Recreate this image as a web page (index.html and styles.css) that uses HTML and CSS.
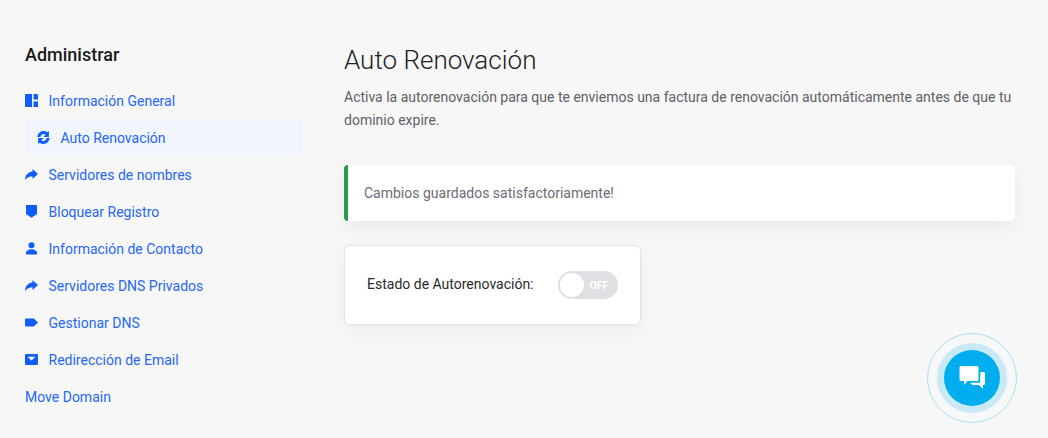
FILE: index.html
```html
<!DOCTYPE html>
<html lang="es">
<head>
    <meta charset="UTF-8">
    <meta name="viewport" content="width=device-width, initial-scale=1.0">
    <title>Auto Renovación</title>
    <link rel="stylesheet" href="styles.css">
</head>
<body>
    <div class="page">
        <aside class="sidebar">
            <h3>Administrar</h3>
            <ul class="menu">
                <li><a href="#">
                    <svg class="icon" viewBox="0 0 13 13"><path d="M0 1a1 1 0 0 1 1-1h6v13H1a1 1 0 0 1-1-1zM8.500 0H12a1 1 0 0 1 1 1v4.500H8.500zM8.500 7.500H13V13H8.500z"/></svg>
                    Información General</a></li>
                <li class="active"><a href="#">
                    <svg class="icon" viewBox="0 0 14 14"><path d="M.4 6.400C.8 2.800 3.500 0 7 0c1.500 0 2.900.5 4 1.400L12.800 0v6.400H7l2.300-2.300C8.700 3.500 7.900 3.200 7 3.200 5.400 3.200 4 4.400 3.700 6.400zM13.600 7.600C13.200 11.200 10.500 14 7 14c-1.500 0-2.900-.5-4-1.400L1.200 14V7.600H7L4.700 9.900c.6.600 1.400.9 2.300.9 1.600 0 3-1.200 3.300-3.200z"/></svg>
                    Auto Renovación</a></li>
                <li><a href="#">
                    <svg class="icon" viewBox="0 0 13 13"><path d="M7.500 1 13 6 7.500 11V8.200C4.500 8.200 2 9.300 0 12 .2 7.500 3 4 7.500 3.600z"/></svg>
                    Servidores de nombres</a></li>
                <li><a href="#">
                    <svg class="icon" viewBox="0 0 13 13"><path d="M1 0h10.500a.5.500 0 0 1 .5.500V9l-5.500 3.800L1 9V.500A.5.500 0 0 1 1 0z"/></svg>
                    Bloquear Registro</a></li>
                <li><a href="#">
                    <svg class="icon" viewBox="0 0 13 13"><circle cx="6.500" cy="3.300" r="3"/><path d="M1 11c0-2.700 3.500-3.800 5.500-3.800S12 8.300 12 11v1.500H1z"/></svg>
                    Información de Contacto</a></li>
                <li><a href="#">
                    <svg class="icon" viewBox="0 0 13 13"><path d="M7.500 1 13 6 7.500 11V8.200C4.500 8.200 2 9.300 0 12 .2 7.500 3 4 7.500 3.600z"/></svg>
                    Servidores DNS Privados</a></li>
                <li><a href="#">
                    <svg class="icon" viewBox="0 0 13 13"><path d="M1 2.500h7.500c.4 0 .7.200.9.500L13 6.500l-3.600 3.500c-.2.300-.5.500-.9.500H1a1 1 0 0 1-1-1v-6a1 1 0 0 1 1-1z"/></svg>
                    Gestionar DNS</a></li>
                <li><a href="#">
                    <svg class="icon" viewBox="0 0 13 13"><path fill-rule="evenodd" d="M1 1h11a1 1 0 0 1 1 1v9a1 1 0 0 1-1 1H1a1 1 0 0 1-1-1V2a1 1 0 0 1 1-1zM2.500 3.800 6.500 7.500l4-3.700z"/></svg>
                    Redirección de Email</a></li>
                <li class="plain"><a href="#">Move Domain</a></li>
            </ul>
        </aside>
        <main class="content">
            <h2>Auto Renovación</h2>
            <p class="intro">Activa la autorenovación para que te enviemos una factura de renovación automáticamente antes de que tu dominio expire.</p>
            <div class="alert">Cambios guardados satisfactoriamente!</div>
            <div class="card">
                <span class="card-label">Estado de Autorenovación:</span>
                <div class="toggle">
                    <span class="knob"></span>
                    <span class="toggle-text">OFF</span>
                </div>
            </div>
        </main>
    </div>
    <div class="chat">
        <div class="chat-btn">
            <svg viewBox="0 0 26 24" width="26" height="24"><path d="M2 0h16a1.500 1.500 0 0 1 1.500 1.500v12A1.500 1.500 0 0 1 18 15H8.500L5 19v-4H2a1.500 1.500 0 0 1-1.500-1.500v-12A1.500 1.500 0 0 1 2 0z"/><path d="M21.500 6h3A1.500 1.500 0 0 1 26 7.500v10a1.500 1.500 0 0 1-1.500 1.500h-.5v4l-4-4h-6.500l-2.500-2.300h9.500a.5.500 0 0 0 .5-.5z"/></svg>
        </div>
    </div>
</body>
</html>
```

FILE: styles.css
```css
* {
    box-sizing: border-box;
}
body {
    font-family: Roboto, "Liberation Sans", sans-serif;
    background-color: #f7f7f7;
    margin: 0;
    padding: 0;
    height: 438px;
    overflow: hidden;
}
.page {
    display: flex;
    padding: 0 33px 0 25px;
}
.sidebar {
    width: 278px;
    margin-right: 41px;
    padding-top: 44px;
}
.sidebar h3 {
    margin: 0 0 16px 0;
    font-size: 18px;
    line-height: 22px;
    font-weight: 500;
    color: #1a1a1a;
}
.menu {
    list-style: none;
    margin: 0;
    padding: 0;
}
.menu li {
    height: 37px;
}
.menu a {
    display: flex;
    align-items: center;
    height: 37px;
    color: #2568f5;
    font-size: 14px;
    text-decoration: none;
}
.menu .active {
    background: #f1f5fe;
    border-radius: 6px;
}
.menu .active a {
    padding-left: 12px;
}
.icon {
    width: 13px;
    height: 13px;
    margin-right: 10.500px;
    fill: #0f5ef7;
    flex: none;
}
.content {
    flex: 1;
    padding-top: 45px;
}
.content h2 {
    margin: 0;
    font-size: 26px;
    line-height: 30px;
    font-weight: 300;
    color: #222;
}
.intro {
    margin: 11px 0 0 0;
    font-size: 14px;
    line-height: 23px;
    color: #5f6068;
}
.alert {
    margin-top: 33px;
    height: 56px;
    display: flex;
    align-items: center;
    padding-left: 16px;
    background: #fff;
    border-left: 4px solid #2b9a48;
    border-radius: 4px;
    font-size: 14px;
    color: #6b6c75;
    box-shadow: 0 6px 20px rgba(0, 0, 0, 0.06);
}
.card {
    margin-top: 24px;
    width: 297px;
    height: 80px;
    display: flex;
    align-items: center;
    padding-left: 22px;
    background: #fff;
    border: 1px solid #e3e3e5;
    border-radius: 6px;
    box-shadow: 0 6px 20px rgba(0, 0, 0, 0.05);
}
.card-label {
    font-size: 14px;
    color: #2a2a2a;
    margin-right: 24px;
    padding-bottom: 2px;
}
.toggle {
    display: flex;
    align-items: center;
    width: 60px;
    height: 28px;
    padding-left: 2px;
    background: #dfe0e4;
    border-radius: 14px;
}
.knob {
    width: 24px;
    height: 24px;
    background: #fff;
    border-radius: 50%;
}
.toggle-text {
    margin-left: 6px;
    font-size: 10.500px;
    font-weight: 700;
    color: #fff;
}
/* floating chat button */
.chat {
    position: absolute;
    left: 927px;
    top: 333px;
    width: 90px;
    height: 90px;
    display: flex;
    align-items: center;
    justify-content: center;
    border: 1.500px solid #a6e0f5;
    border-radius: 50%;
}
.chat-btn {
    width: 56px;
    height: 56px;
    display: flex;
    align-items: center;
    justify-content: center;
    background: #00adef;
    border-radius: 50%;
    box-shadow: 0 0 0 7px #c9e9f6;
}
.chat-btn svg {
    fill: #fff;
}
```
